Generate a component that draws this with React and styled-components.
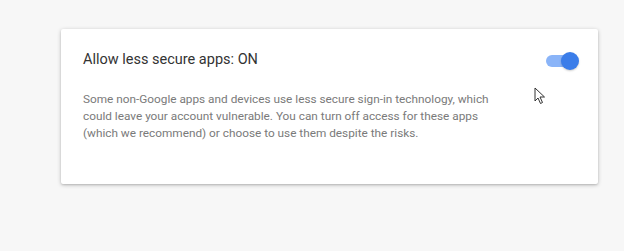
import React from "react";
import styled, { createGlobalStyle } from "styled-components";

const GlobalStyle = createGlobalStyle`
  body {
    margin: 0;
    background: #f7f7f7;
    font-family: Roboto, "Liberation Sans", sans-serif;
  }
`;

const Page = styled.div`
  width: 624px;
  height: 251px;
  padding: 29px 0 0 61px;
  box-sizing: border-box;
  position: relative;
`;

const Card = styled.section`
  width: 537px;
  height: 155px;
  box-sizing: border-box;
  background: #fff;
  border-radius: 2px;
  box-shadow: 0 1px 4px rgba(0, 0, 0, 0.22), 0 1px 2px rgba(0, 0, 0, 0.12);
  padding: 21px 22px 0 22px;
`;

const Header = styled.div`
  display: flex;
  align-items: center;
  justify-content: space-between;
`;

const Title = styled.h2`
  margin: 0;
  font-size: 14.5px;
  font-weight: 400;
  line-height: 20px;
  color: #333;
`;

const Track = styled.div`
  width: 30px;
  height: 12px;
  border-radius: 6px;
  background: #8ab4f8;
  position: relative;
  margin-top: 2px;
`;

const Knob = styled.div`
  position: absolute;
  right: -3px;
  top: -3px;
  width: 18px;
  height: 18px;
  border-radius: 50%;
  background: #3b7de9;
  box-shadow: 0 1px 2px rgba(0, 0, 0, 0.2);
`;

const Body = styled.p`
  margin: 21px 0 0;
  width: 415px;
  font-size: 11.8px;
  line-height: 17px;
  color: #7a7a7a;
`;

const Cursor = styled.svg`
  position: absolute;
  left: 534px;
  top: 87px;
`;

export default function App() {
  return (
    <>
      <GlobalStyle />
      <Page>
        <Card>
          <Header>
            <Title>Allow less secure apps: ON</Title>
            <Track>
              <Knob />
            </Track>
          </Header>
          <Body>
            Some non-Google apps and devices use less secure sign-in technology, which
            could leave your account vulnerable. You can turn off access for these apps
            (which we recommend) or choose to use them despite the risks.
          </Body>
        </Card>
        <Cursor width="12" height="18" viewBox="0 0 12 18">
          <path d="M1 1 L1 14 L4 11 L6.5 16.5 L8.5 15.5 L6 10 L10.5 10 Z" fill="#fff" stroke="#333" strokeWidth="1" strokeLinejoin="round" />
        </Cursor>
      </Page>
    </>
  );
}
